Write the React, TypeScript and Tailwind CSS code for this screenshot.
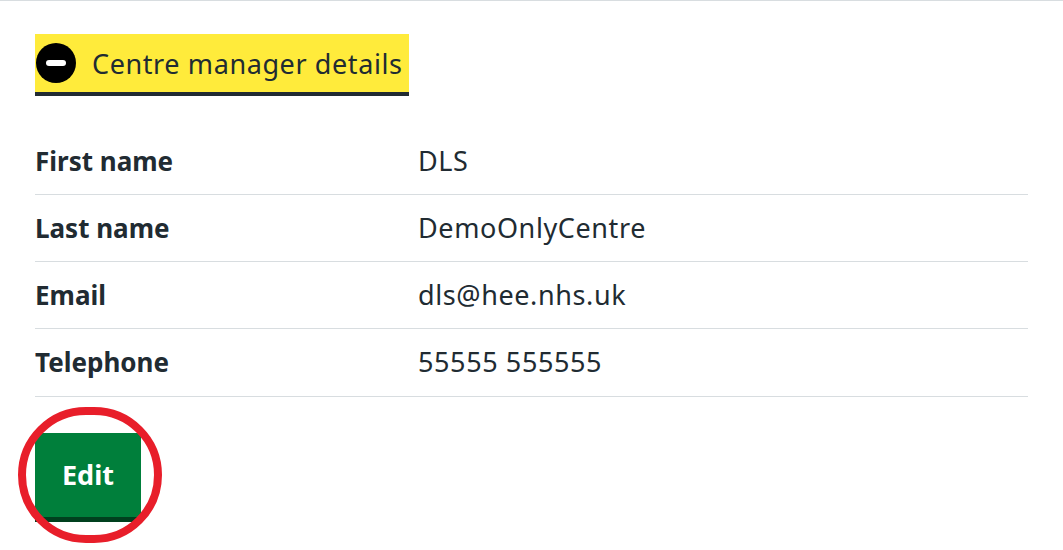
export default function App() {
  const rows = [
    { label: 'First name', value: 'DLS' },
    { label: 'Last name', value: 'DemoOnlyCentre' },
    { label: 'Email', value: 'dls@hee.nhs.uk' },
    { label: 'Telephone', value: '55555 555555' },
  ];

  return (
    <div
      className="min-h-[550px] bg-white border-t border-[#d8dde0] pt-[33px] px-[35px] text-[#212b32]"
      style={{ fontFamily: '"Noto Sans", Arial, sans-serif' }}
    >
      {/* Expanded details summary (focused) */}
      <div className="inline-flex items-center h-[58px] pr-[6px] bg-[#ffeb3b] shadow-[0_4px_0_#212b32]">
        <span className="flex items-center justify-center w-[40px] h-[40px] ml-px rounded-full bg-black">
          <span className="block w-[20px] h-[6px] rounded-sm bg-white" />
        </span>
        <span className="ml-[16px] text-[27px] tracking-[0.6px] leading-none">Centre manager details</span>
      </div>

      <dl className="mt-[36px] w-[993px]">
        {rows.map((row) => (
          <div key={row.label} className="flex items-center h-[67px] border-b border-[#d8dde0] last:h-[68px]">
            <dt className="w-[383px] text-[26px] font-bold">{row.label}</dt>
            <dd className="text-[27px] tracking-[0.6px]">{row.value}</dd>
          </div>
        ))}
      </dl>

      <div className="relative mt-[36px] inline-block">
        <button className="w-[106px] h-[84px] bg-[#007f3b] text-white text-[27px] font-bold shadow-[0_5px_0_#00401e]">
          Edit
        </button>
        {/* Red annotation ring */}
        <span className="absolute left-[-17px] top-[-26px] w-[144px] h-[136px] rounded-full border-[8px] border-[#e81e2a] pointer-events-none" />
      </div>
    </div>
  );
}
